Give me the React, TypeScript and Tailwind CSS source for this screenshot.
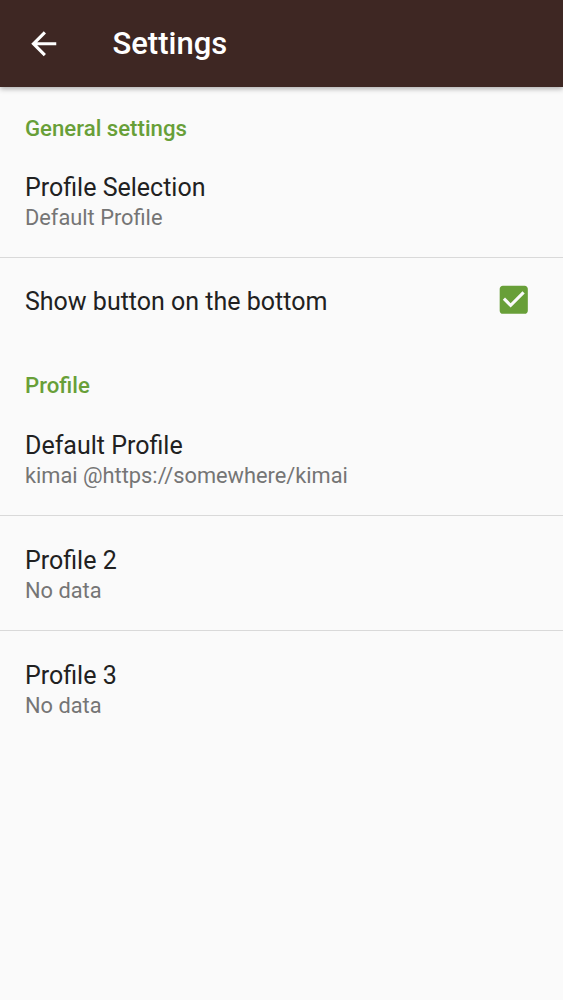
import React from "react";

const font = { fontFamily: "Roboto, 'Noto Sans', sans-serif" };

function Row({ title, sub }: { title: string; sub: string }) {
  return (
    <div className="pl-[25px] pr-[25px] pt-[30px] pb-[26px]">
      <div className="text-[25px] leading-[29px] text-[#212121]">{title}</div>
      <div className="mt-[3px] text-[21.8px] leading-[26px] text-[#757575]">{sub}</div>
    </div>
  );
}

function Divider() {
  return <div className="h-px bg-[#d9d9d9]" />;
}

function Category({ label, pt, pb }: { label: string; pt: string; pb: string }) {
  return (
    <div className={`pl-[25px] ${pt} ${pb} text-[22.2px] leading-[26px] font-medium text-[#689f38]`}>
      {label}
    </div>
  );
}

export default function App() {
  return (
    <div className="min-h-[1000px] bg-[#fafafa]" style={font}>
      <header className="relative z-10 flex h-[87px] items-center bg-[#3e2723] shadow-[0_2px_5px_rgba(0,0,0,0.3)]">
        <div className="ml-[25px] flex h-[37.5px] w-[37.5px] items-center justify-center">
          <svg viewBox="0 0 24 24" width="37.5" height="37.5" fill="#ffffff">
            <path d="M20 11H7.83l5.59-5.59L12 4l-8 8 8 8 1.41-1.41L7.83 13H20v-2z" />
          </svg>
        </div>
        <div className="ml-[50px] text-[31px] font-medium leading-none text-white">Settings</div>
      </header>

      <Category label="General settings" pt="pt-[28px]" pb="pb-[2px]" />
      <Row title="Profile Selection" sub="Default Profile" />
      <Divider />
      <div className="flex h-[87px] items-center justify-between pl-[25px] pr-[31px]">
        <div className="text-[25px] leading-[29px] text-[#212121]">Show button on the bottom</div>
        <svg viewBox="0 0 24 24" width="37.5" height="37.5" fill="#689f38" className="-mt-[3px]">
          <path d="M19 3H5c-1.11 0-2 .9-2 2v14c0 1.1.89 2 2 2h14c1.11 0 2-.9 2-2V5c0-1.1-.89-2-2-2zm-9 14l-5-5 1.41-1.41L10 14.17l7.59-7.59L19 8l-9 9z" />
        </svg>
      </div>
      <Category label="Profile" pt="pt-[27px]" pb="pb-[3px]" />
      <Row title="Default Profile" sub="kimai @https://somewhere/kimai" />
      <Divider />
      <Row title="Profile 2" sub="No data" />
      <Divider />
      <Row title="Profile 3" sub="No data" />
    </div>
  );
}
